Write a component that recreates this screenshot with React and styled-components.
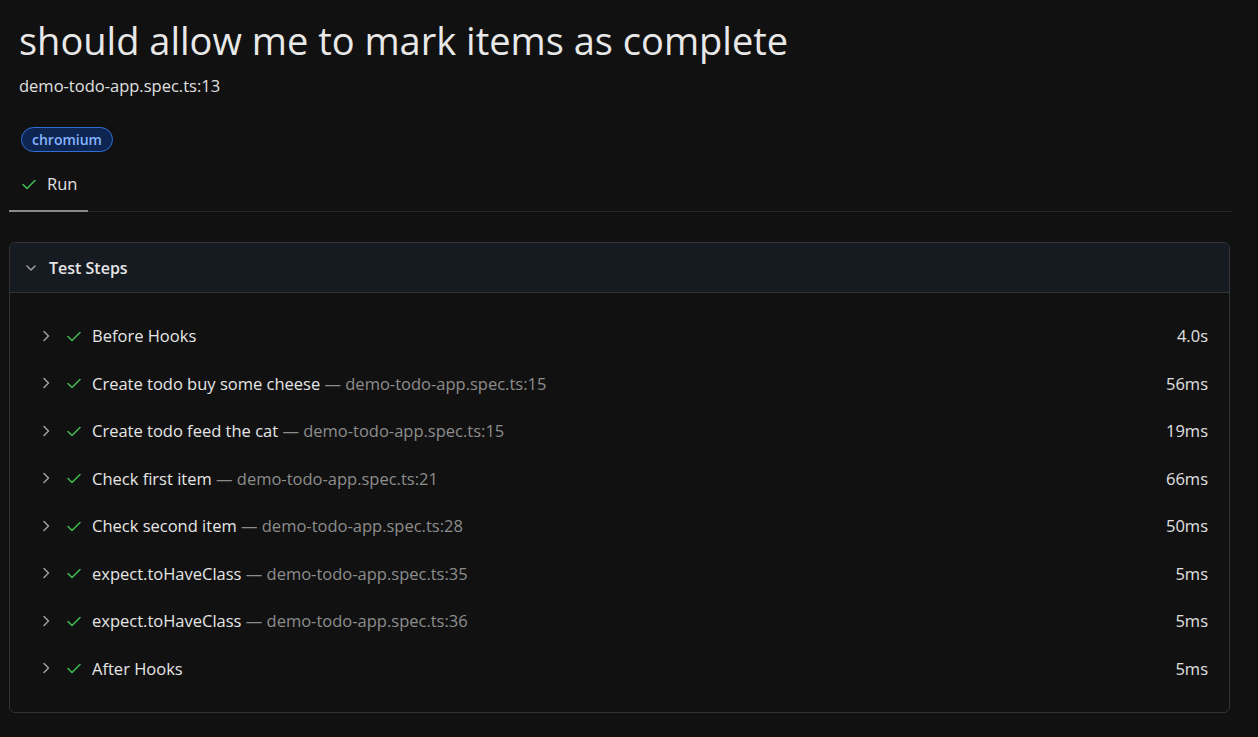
import styled, { createGlobalStyle } from "styled-components";

const GlobalStyle = createGlobalStyle`
  html, body {
    margin: 0;
    background: #111111;
  }
  body {
    font-family: "Segoe UI", "Open Sans", "Noto Sans", sans-serif;
    color: #e6e6e6;
  }
`;

const steps = [
  { title: "Before Hooks", time: "4.0s" },
  { title: "Create todo buy some cheese", loc: "demo-todo-app.spec.ts:15", time: "56ms" },
  { title: "Create todo feed the cat", loc: "demo-todo-app.spec.ts:15", time: "19ms" },
  { title: "Check first item", loc: "demo-todo-app.spec.ts:21", time: "66ms" },
  { title: "Check second item", loc: "demo-todo-app.spec.ts:28", time: "50ms" },
  { title: "expect.toHaveClass", loc: "demo-todo-app.spec.ts:35", time: "5ms" },
  { title: "expect.toHaveClass", loc: "demo-todo-app.spec.ts:36", time: "5ms" },
  { title: "After Hooks", time: "5ms" },
];

const Check = ({ size = 16 }) => (
  <svg width={size} height={size} viewBox="0 0 16 16" fill="none">
    <path d="M2 8.5 L6 12.5 L14 4.5" stroke="#3fb950" strokeWidth="1.6" strokeLinecap="round" strokeLinejoin="round" />
  </svg>
);

const Chevron = ({ down }) => (
  <svg width="16" height="16" viewBox="0 0 16 16" fill="none">
    {down ? (
      <path d="M4 6 L8 10 L12 6" stroke="#a0a0a0" strokeWidth="1.5" strokeLinecap="round" strokeLinejoin="round" />
    ) : (
      <path d="M6 3.5 L10.5 8 L6 12.5" stroke="#a0a0a0" strokeWidth="1.5" strokeLinecap="round" strokeLinejoin="round" />
    )}
  </svg>
);

const App = () => {
  return (
    <Page>
      <GlobalStyle />
      <Title>should allow me to mark items as complete</Title>
      <Location>demo-todo-app.spec.ts:13</Location>
      <Chip>chromium</Chip>
      <Tabs>
        <Tab>
          <Check />
          <span>Run</span>
        </Tab>
      </Tabs>
      <Card>
        <CardHeader>
          <Chevron down />
          <span>Test Steps</span>
        </CardHeader>
        <StepList>
          {steps.map((s, i) => (
            <Step key={i}>
              <Chevron />
              <Check />
              <StepTitle>
                {s.title}
                {s.loc && <StepLoc> — {s.loc}</StepLoc>}
              </StepTitle>
              <Duration>{s.time}</Duration>
            </Step>
          ))}
        </StepList>
      </Card>
    </Page>
  );
};

export default App;

const Page = styled.div`
  padding: 14px 28px 24px 9px;
`;

const Title = styled.h1`
  margin: 0 0 0 10px;
  font-size: 38px;
  font-weight: 400;
  line-height: 52px;
  color: #e8e8e8;
`;

const Location = styled.div`
  margin: 10px 0 0 10px;
  font-size: 16.5px;
  line-height: 20px;
  color: #e0e0e0;
`;

const Chip = styled.span`
  display: inline-block;
  margin: 31px 0 0 12px;
  padding: 0 10px;
  height: 25px;
  line-height: 23px;
  box-sizing: border-box;
  border: 1px solid #2f6fd6;
  border-radius: 13px;
  background: #0d2550;
  color: #85b4ff;
  font-size: 14px;
  font-weight: 600;
`;

const Tabs = styled.div`
  display: flex;
  margin-top: 12px;
  border-bottom: 1px solid #262626;
  width: 1223px;
`;

const Tab = styled.div`
  display: flex;
  align-items: center;
  gap: 10px;
  padding: 8px 10px 15px 12px;
  width: 79px;
  box-sizing: border-box;
  font-size: 16.5px;
  color: #e0e0e0;
  border-bottom: 2px solid #8a8a8a;
  margin-bottom: -1px;
`;

const Card = styled.div`
  margin-top: 30px;
  width: 1219px;
  border: 1px solid #333333;
  border-radius: 6px;
  overflow: hidden;
`;

const CardHeader = styled.div`
  display: flex;
  align-items: center;
  gap: 10px;
  height: 49px;
  padding-left: 13px;
  background: #161b22;
  border-bottom: 1px solid #333333;
  font-size: 16px;
  font-weight: 600;
  color: #e6e6e6;
`;

const StepList = styled.div`
  padding: 19px 0 20px;
`;

const Step = styled.div`
  display: flex;
  align-items: center;
  gap: 12px;
  height: 47.5px;
  padding: 0 21px 0 28px;
  font-size: 16.5px;
`;

const StepTitle = styled.div`
  flex: 1;
  margin-left: -2px;
  color: #e6e6e6;
`;

const StepLoc = styled.span`
  color: #8d8d8d;
`;

const Duration = styled.div`
  color: #e0e0e0;
`;
